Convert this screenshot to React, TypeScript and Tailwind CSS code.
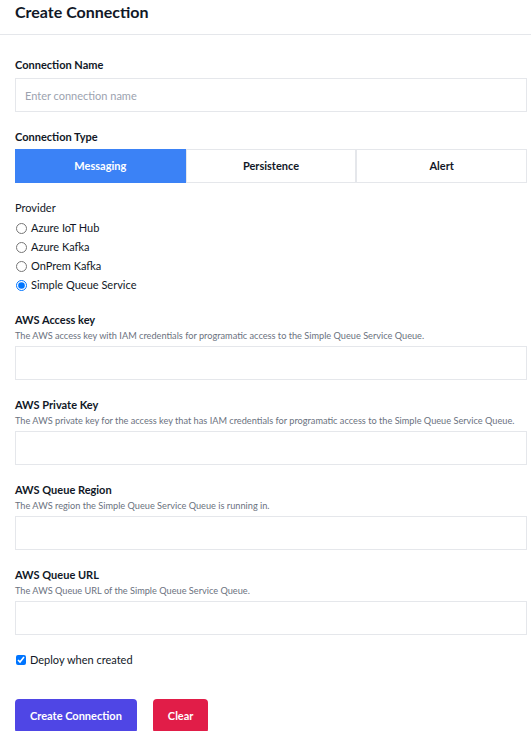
import { useState } from "react";

const providers = ["Azure IoT Hub", "Azure Kafka", "OnPrem Kafka", "Simple Queue Service"];
const types = ["Messaging", "Persistence", "Alert"];

const awsFields = [
  {
    label: "AWS Access key",
    help: "The AWS access key with IAM credentials for programatic access to the Simple Queue Service Queue.",
  },
  {
    label: "AWS Private Key",
    help: "The AWS private key for the access key that has IAM credentials for programatic access to the Simple Queue Service Queue.",
  },
  {
    label: "AWS Queue Region",
    help: "The AWS region the Simple Queue Service Queue is running in.",
  },
  {
    label: "AWS Queue URL",
    help: "The AWS Queue URL of the Simple Queue Service Queue.",
  },
];

export default function App() {
  const [type, setType] = useState("Messaging");
  const [provider, setProvider] = useState("Simple Queue Service");
  const [deploy, setDeploy] = useState(true);

  return (
    <div className="min-h-screen bg-white font-['Lato','Liberation_Sans',sans-serif] text-[#111827]">
      {/* Title bar */}
      <header className="h-[35px] border-b border-[#e5e7eb] px-[15px]">
        <h1 className="text-base font-bold leading-6">Create Connection</h1>
      </header>

      <form className="pl-[15px] pr-1 pt-[21px]" onSubmit={(e) => e.preventDefault()}>
        <label className="block text-[11px] font-bold leading-[18px]">Connection Name</label>
        <input
          type="text"
          placeholder="Enter connection name"
          className="mt-1 block h-[34px] w-full border border-[#e5e7eb] px-[9px] text-[11px] outline-none placeholder:text-[#9ca3af]"
        />

        <label className="mt-4 block text-[11px] font-bold leading-[18px]">Connection Type</label>
        <div className="mt-[3px] grid h-[34px] grid-cols-3">
          {types.map((t) => (
            <button
              key={t}
              type="button"
              onClick={() => setType(t)}
              className={
                t === type
                  ? "border border-[#3b82f6] bg-[#3b82f6] text-[11px] font-bold text-white"
                  : "border border-[#e5e7eb] bg-white text-[11px] font-bold text-[#111827]"
              }
            >
              {t}
            </button>
          ))}
        </div>

        {/* Provider radio list */}
        <div className="mt-4 text-[11px] leading-[18px]">Provider</div>
        <div className="mt-[2px] flex flex-col">
          {providers.map((p) => (
            <label key={p} className="flex h-[19px] items-center gap-[4px] text-[11px]">
              <input
                type="radio"
                name="provider"
                checked={provider === p}
                onChange={() => setProvider(p)}
                className="m-0 ml-px h-[11px] w-[11px]"
              />
              {p}
            </label>
          ))}
        </div>

        {awsFields.map((f) => (
          <div key={f.label} className="mt-4 first-of-type:mt-[15px]">
            <label className="block text-[11px] font-bold leading-[18px]">{f.label}</label>
            <p className="text-[9.2px] leading-[14px] text-[#6b7280]">{f.help}</p>
            <input
              type="text"
              className="mt-[3px] block h-[34px] w-full border border-[#e5e7eb] px-[9px] text-[11px] outline-none"
            />
          </div>
        ))}

        <label className="mt-4 flex h-[18px] items-center gap-[4px] text-[11px]">
          <input
            type="checkbox"
            checked={deploy}
            onChange={(e) => setDeploy(e.target.checked)}
            className="m-0 ml-px h-[10px] w-[10px]"
          />
          Deploy when created
        </label>

        <div className="mt-[30px] flex gap-4 pb-4">
          <button
            type="submit"
            className="h-[34px] rounded-sm bg-[#4f46e5] px-[15px] text-[11px] font-bold text-white"
          >
            Create Connection
          </button>
          <button
            type="button"
            className="h-[34px] rounded-sm bg-[#e11d48] px-[15px] text-[11px] font-bold text-white"
          >
            Clear
          </button>
        </div>
      </form>
    </div>
  );
}
